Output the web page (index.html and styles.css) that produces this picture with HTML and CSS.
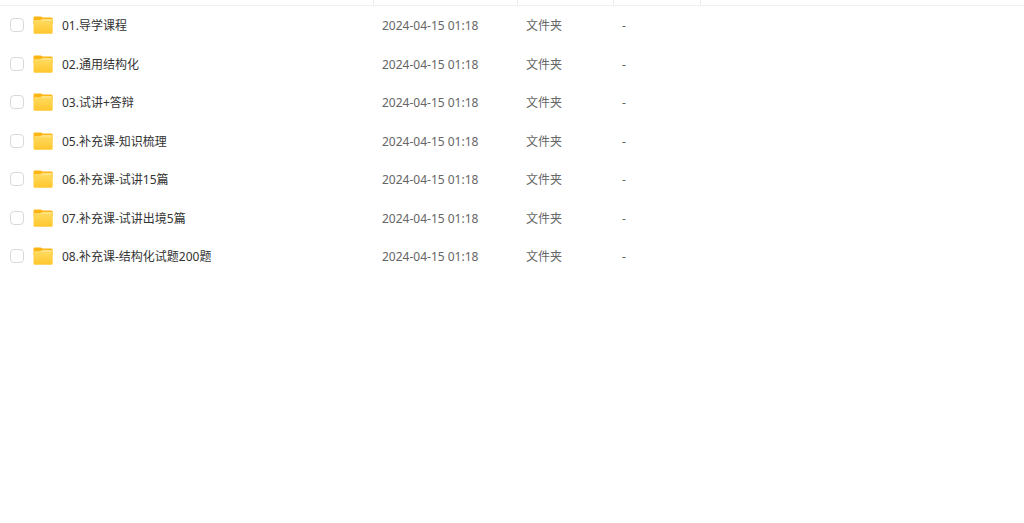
FILE: index.html
```html
<!DOCTYPE html>
<html lang="zh-CN">
<head>
<meta charset="utf-8">
<title>文件夹</title>
<link rel="stylesheet" href="styles.css">
</head>
<body>
<svg class="defs" width="0" height="0" aria-hidden="true">
  <defs>
    <linearGradient id="front" x1="0" y1="0" x2="0" y2="1">
      <stop offset="0" stop-color="#ffdc64"/>
      <stop offset="1" stop-color="#ffc62c"/>
    </linearGradient>
    <linearGradient id="shine" x1="0" y1="0" x2="0" y2="1">
      <stop offset="0" stop-color="#fff0b4"/>
      <stop offset="1" stop-color="#ffdc64" stop-opacity="0"/>
    </linearGradient>
    <symbol id="folder" viewBox="0 0 20 18">
      <path d="M0.5 2Q0.5 0.6 1.8 0.6H7.6Q8.4 0.6 9 1.1L9.6 1.5H18.2Q19.7 1.5 19.7 3V8H0.5Z" fill="#fdb515"/>
      <path d="M0.5 5.7Q0.5 4.3 1.9 4.3H6.6Q7.4 4.3 8 3.8Q8.6 3.3 9.4 3.3H18.3Q19.7 3.3 19.7 4.7V16.3Q19.7 17.8 18.2 17.8H2Q0.5 17.8 0.5 16.3Z" fill="url(#front)"/>
      <path d="M1.6 4.5H6.7Q7.5 4.5 8.1 4Q8.7 3.5 9.4 3.5H18.6V5.8H1.6Z" fill="url(#shine)"/>
    </symbol>
  </defs>
</svg>
<table class="files">
  <colgroup><col class="col-name"><col class="col-date"><col class="col-type"><col class="col-size"><col></colgroup>
  <thead>
    <tr><th></th><th></th><th></th><th></th><th></th></tr>
  </thead>
  <tbody>
    <tr><td><div class="name"><input type="checkbox" id="f1"><svg class="icon"><use href="#folder"/></svg><label for="f1">01.导学课程</label></div></td><td>2024-04-15 01:18</td><td>文件夹</td><td>-</td><td></td></tr>
    <tr><td><div class="name"><input type="checkbox" id="f2"><svg class="icon"><use href="#folder"/></svg><label for="f2">02.通用结构化</label></div></td><td>2024-04-15 01:18</td><td>文件夹</td><td>-</td><td></td></tr>
    <tr><td><div class="name"><input type="checkbox" id="f3"><svg class="icon"><use href="#folder"/></svg><label for="f3">03.试讲+答辩</label></div></td><td>2024-04-15 01:18</td><td>文件夹</td><td>-</td><td></td></tr>
    <tr><td><div class="name"><input type="checkbox" id="f4"><svg class="icon"><use href="#folder"/></svg><label for="f4">05.补充课-知识梳理</label></div></td><td>2024-04-15 01:18</td><td>文件夹</td><td>-</td><td></td></tr>
    <tr><td><div class="name"><input type="checkbox" id="f5"><svg class="icon"><use href="#folder"/></svg><label for="f5">06.补充课-试讲15篇</label></div></td><td>2024-04-15 01:18</td><td>文件夹</td><td>-</td><td></td></tr>
    <tr><td><div class="name"><input type="checkbox" id="f6"><svg class="icon"><use href="#folder"/></svg><label for="f6">07.补充课-试讲出境5篇</label></div></td><td>2024-04-15 01:18</td><td>文件夹</td><td>-</td><td></td></tr>
    <tr><td><div class="name"><input type="checkbox" id="f7"><svg class="icon"><use href="#folder"/></svg><label for="f7">08.补充课-结构化试题200题</label></div></td><td>2024-04-15 01:18</td><td>文件夹</td><td>-</td><td></td></tr>
  </tbody>
</table>
</body>
</html>
```
FILE: styles.css
```css
body {
  margin: 0;
  background: #fff;
  color: #666;
  font: 12px/18px "Noto Sans", "Noto Sans CJK SC", sans-serif;
}

.defs {
  display: block;
}

.files {
  width: 100%;
  table-layout: fixed;
  border-collapse: separate;
  border-spacing: 0;
}

.col-name { width: 374px; }
.col-date { width: 144px; }
.col-type { width: 96px; }
.col-size { width: 87px; }

th {
  height: 5px;
  padding: 0;
  border-right: 1px solid #ececec;
  border-bottom: 1px solid #f1f1f1;
}

th:last-child {
  border-right: 0;
}

td {
  box-sizing: border-box;
  height: 38px;
  padding: 2px 8px 0;
  vertical-align: middle;
}

tr:nth-child(even) td {
  height: 39px;
}

td:first-child {
  padding: 0 8px 0 10px;
}

.name {
  display: flex;
  align-items: center;
  color: #333;
}

.name label {
  padding-top: 2px;
}

.name input {
  appearance: none;
  box-sizing: border-box;
  width: 14px;
  height: 14px;
  margin: 0 9px 0 0;
  border: 1px solid #d9d9d9;
  border-radius: 4px;
  background: #fff;
}

.name input:checked {
  background: #06a7ff;
}

.icon {
  width: 20px;
  height: 18px;
  margin-right: 9px;
}
```
